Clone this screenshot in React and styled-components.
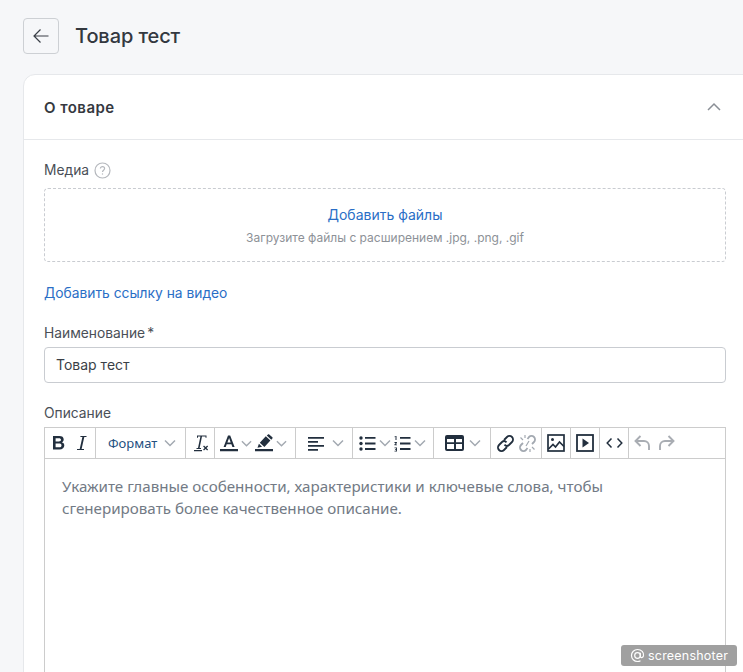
import styled, { createGlobalStyle } from "styled-components";

const GlobalStyle = createGlobalStyle`
  html, body {
    margin: 0;
    height: 672px;
    overflow: hidden;
    background: #f6f7f9;
    font-family: Inter, "Noto Sans", sans-serif;
  }
`;

const Page = styled.div`
  width: 747px;
  height: 672px;
  overflow: hidden;
  padding: 18px 0 0 23px;
  box-sizing: border-box;
`;

const TopBar = styled.div`
  display: flex;
  align-items: center;
  gap: 16px;
  margin-bottom: 20px;
`;

const BackButton = styled.button`
  width: 36px;
  height: 36px;
  padding: 0;
  display: flex;
  align-items: center;
  justify-content: center;
  background: #f6f7f9;
  border: 1px solid #cdd0d4;
  border-radius: 4px;
  color: #3a3f47;
`;

const Title = styled.h1`
  margin: 0;
  font-size: 20px;
  line-height: 36px;
  font-weight: 500;
  letter-spacing: -0.1px;
  color: #33383f;
`;

const Card = styled.section`
  background: #fff;
  border: 1px solid #e6e8eb;
  border-radius: 12px 0 0 0;
  min-height: 640px;
`;

const CardHeader = styled.div`
  height: 64px;
  padding: 0 25px 0 20px;
  display: flex;
  align-items: center;
  justify-content: space-between;
  border-bottom: 1px solid #e6e8eb;
`;

const CardTitle = styled.h2`
  margin: 0;
  font-size: 15px;
  font-weight: 600;
  letter-spacing: 0.45px;
  color: #35393f;
`;

const CardBody = styled.div`
  padding: 20px 20px 0;
`;

const Label = styled.div`
  display: flex;
  align-items: center;
  gap: 5px;
  height: 20px;
  font-size: 13.8px;
  color: #4a4f57;
`;

const Required = styled.span`
  margin-left: -3px;
`;

const DropZone = styled.div`
  margin-top: 8px;
  height: 74px;
  box-sizing: border-box;
  border: 1px dashed #c9ccd1;
  border-radius: 4px;
  display: flex;
  flex-direction: column;
  align-items: center;
  padding-top: 17px;
  gap: 6px;
`;

const TextLink = styled.a`
  font-size: 14px;
  line-height: 18px;
  color: #2a6ec6;
`;

const Hint = styled.div`
  font-size: 12px;
  line-height: 16px;
  color: #8d9197;
`;

const VideoLink = styled(TextLink)`
  display: block;
  font-size: 13.8px;
  margin: 22px 0 21px;
`;

const Input = styled.div`
  margin-top: 4px;
  height: 36px;
  box-sizing: border-box;
  border: 1px solid #c9ccd1;
  border-radius: 4px;
  padding: 0 11px 1px;
  display: flex;
  align-items: center;
  font-size: 14px;
  color: #3a3f47;
  margin-bottom: 20px;
`;

const Editor = styled.div`
  margin-top: 4px;
  border: 1px solid #ccc;
  border-bottom: 0;
  font-family: "Noto Sans", sans-serif;
`;

const Toolbar = styled.div`
  display: flex;
  height: 30px;
  border-bottom: 1px solid #ccc;
  color: #222f3e;
`;

const Group = styled.div`
  width: ${(p) => p.$width}px;
  box-sizing: border-box;
  display: flex;
  align-items: center;
  justify-content: ${(p) => p.$justify || "flex-start"};
  padding-left: ${(p) => p.$pad || 0}px;
  gap: ${(p) => p.$gap || 0}px;
  border-right: ${(p) => (p.$last ? "0" : "1px solid #ccc")};
  flex: none;
`;

const FormatText = styled.span`
  font-size: 13px;
  color: #24507f;
  width: 49px;
`;

const EditorArea = styled.div`
  height: 300px;
  padding: 16px 20px 17px 17px;
  font-size: 15.17px;
  line-height: 22px;
  color: #727a85;
`;

const Badge = styled.div`
  position: fixed;
  left: 621px;
  top: 645px;
  width: 116px;
  height: 21px;
  box-sizing: border-box;
  border-radius: 3px;
  background: #a0a0a0;
  color: #fff;
  display: flex;
  align-items: center;
  gap: 3px;
  padding-left: 9px;
  font-size: 12.5px;
  letter-spacing: 0.2px;
`;

const Svg = styled.svg`
  display: block;
  flex: none;
  color: ${(p) => p.$color || "currentColor"};
`;

function Chevron({ size = 12, color = "#a3a9b1", width = 1.5 }) {
  return (
    <Svg width={size} height={size} viewBox="0 0 12 12" fill="none" stroke={color} strokeWidth={width}>
      <path d="M1 3.5 6 8.5 11 3.5" />
    </Svg>
  );
}

function Icon({ w = 18, h = 18, vb = "0 0 18 18", color, children }) {
  return (
    <Svg width={w} height={h} viewBox={vb} fill="currentColor" $color={color}>
      {children}
    </Svg>
  );
}

function App() {
  return (
    <>
      <GlobalStyle />
      <Page>
        <TopBar>
          <BackButton>
            <Svg width="18" height="18" viewBox="0 0 18 18" fill="none" stroke="currentColor" strokeWidth="1.2">
              <path d="M16.5 9H2M8.5 2.5 2 9l6.5 6.5" />
            </Svg>
          </BackButton>
          <Title>Товар тест</Title>
        </TopBar>
        <Card>
          <CardHeader>
            <CardTitle>О товаре</CardTitle>
            <Svg width="14" height="14" viewBox="0 0 14 14" fill="none" stroke="#8a8f96" strokeWidth="1.5">
              <path d="M1 10 7 4l6 6" />
            </Svg>
          </CardHeader>
          <CardBody>
            <Label>
              Медиа
              <Svg width="17" height="17" viewBox="0 0 17 17" fill="none" stroke="#b5b8bd" strokeWidth="1.2">
                <circle cx="8.5" cy="8.5" r="7.5" />
                <path d="M6.4 6.6c0-1.2 1-2 2.1-2s2.1.8 2.1 2c0 1.6-2.1 1.6-2.1 3.3" />
                <path d="M8.5 11.4v1.2" />
              </Svg>
            </Label>
            <DropZone>
              <TextLink>Добавить файлы</TextLink>
              <Hint>Загрузите файлы с расширением .jpg, .png, .gif</Hint>
            </DropZone>
            <VideoLink>Добавить ссылку на видео</VideoLink>
            <Label>
              Наименование<Required>*</Required>
            </Label>
            <Input>Товар тест</Input>
            <Label>Описание</Label>
            <Editor>
              <Toolbar>
                <Group $width={51} $pad={7} $gap={11}>
                  <Icon w={14} h={16} vb="0 0 14 16">
                    <path d="M1 1h6.3c2.8 0 4.4 1.2 4.4 3.4 0 1.4-.8 2.4-2 2.9 1.6.4 2.6 1.5 2.6 3.2 0 2.4-1.8 3.9-4.8 3.9H1V1zm2.6 2.2v3.3h3.2c1.4 0 2.2-.6 2.2-1.7s-.8-1.6-2.2-1.6H3.6zm0 5.4v3.7h3.4c1.6 0 2.5-.7 2.5-1.9s-.9-1.8-2.5-1.8H3.6z" />
                  </Icon>
                  <Icon w={10} h={16} vb="0 0 10 16">
                    <path d="M3.5 1h6v1H7.3L4.6 14H7v1H0v-1h2.7L5.4 2H3.3z" />
                  </Icon>
                </Group>
                <Group $width={90} $pad={12} $gap={7}>
                  <FormatText>Формат</FormatText>
                  <Chevron />
                </Group>
                <Group $width={29} $pad={6}>
                  <Icon w={18} h={18} vb="0 0 18 18">
                    <path d="M2 16h8v1.2H2zM5 1.5h9.5v2.2h-1V2.6H10L7.6 14H9v1H4.5v-1H6L8.4 2.6H6v1.1H5z" />
                    <path d="M12 11.5l1.6 1.6 1.6-1.6.9.9-1.6 1.6 1.6 1.6-.9.9-1.6-1.6-1.6 1.6-.9-.9 1.6-1.6-1.6-1.6z" />
                  </Icon>
                </Group>
                <Group $width={81} $pad={5} $gap={3}>
                  <Icon w={18} h={18}>
                    <path d="M0 15h18v2.2H0zM8 1.5h2.2L14.6 13h-2.2l-1-2.8H6.7l-1 2.8H3.6zm-.6 7h3.3L9.1 4z" />
                  </Icon>
                  <Chevron size={11} />
                  <Icon w={18} h={18}>
                    <path d="M0 15h18v2.2H0zM2.5 13.8l1.4-4 3.2 3zM4.8 8.8l6-6.6 4.6 4.2-6 6.6zM11.8 1.4l1.2-1c.4-.3.9-.3 1.2 0l3.2 2.9c.3.3.3.8 0 1.2l-1.1 1.2z" />
                  </Icon>
                  <Chevron size={11} />
                </Group>
                <Group $width={57} $pad={12} $gap={7}>
                  <Icon w={17} h={17} vb="0 0 17 17">
                    <path d="M0 2h16v1.8H0zM0 6h10v1.8H0zM0 10h16v1.8H0zM0 14h10v1.8H0z" />
                  </Icon>
                  <Chevron />
                </Group>
                <Group $width={81} $pad={6} $gap={3}>
                  <Icon w={17} h={17} vb="0 0 17 17">
                    <circle cx="2" cy="3" r="1.7" />
                    <circle cx="2" cy="8.5" r="1.7" />
                    <circle cx="2" cy="14" r="1.7" />
                    <path d="M6 2h10.5v1.8H6zM6 7.6h10.5v1.8H6zM6 13.1h10.5v1.8H6z" />
                  </Icon>
                  <Chevron />
                  <Icon w={17} h={17} vb="0 0 17 17">
                    <path d="M1.5 1h1v4h-1zM.5 1.5 1.8 1v.8L.5 2.2zM.5 7h2.4v1L1.6 9.5h1.4v.8H.4v-.9L1.8 8H.5zM.5 12.5H3v4H.5v-.7h1.6v-.9H1v-.7h1.1v-1H.5z" />
                    <path d="M6 2h10.5v1.8H6zM6 7.6h10.5v1.8H6zM6 13.1h10.5v1.8H6z" />
                  </Icon>
                  <Chevron />
                </Group>
                <Group $width={57} $pad={11} $gap={5}>
                  <Icon w={19} h={16} vb="0 0 19 16">
                    <path fillRule="evenodd" d="M2 0h15a2 2 0 0 1 2 2v12a2 2 0 0 1-2 2H2a2 2 0 0 1-2-2V2a2 2 0 0 1 2-2zm0 4v3.2h7V4zm9 0v3.2h6V4zM2 9v5h7V9zm9 0v5h6V9z" />
                  </Icon>
                  <Chevron />
                </Group>
                <Group $width={51} $pad={5} $gap={3}>
                  <Svg width="19" height="19" viewBox="0 0 19 19" fill="none" stroke="currentColor" strokeWidth="1.8">
                    <path d="M8 6 11 3a3.2 3.2 0 0 1 5 5l-3 3a3.2 3.2 0 0 1-4.5-.4" />
                    <path d="M11 13 8 16a3.2 3.2 0 0 1-5-5l3-3a3.2 3.2 0 0 1 4.5.4" />
                  </Svg>
                  <Svg width="19" height="19" viewBox="0 0 19 19" fill="none" stroke="#a3a9b1" strokeWidth="1.8">
                    <path d="M9.5 5 11 3a3.2 3.2 0 0 1 5 5l-2 2" />
                    <path d="M9.5 14 8 16a3.2 3.2 0 0 1-5-5l2-2" />
                    <path d="M7 1v3M2.5 3.5 5 6M12 18v-3M16.5 15.5 14 13M11 7l-3 5" strokeWidth="1.2" />
                  </Svg>
                </Group>
                <Group $width={29} $justify="center">
                  <Svg width="18" height="18" viewBox="0 0 18 18" fill="none" stroke="currentColor" strokeWidth="1.7">
                    <rect x="1" y="1" width="16" height="16" />
                    <circle cx="5.5" cy="5.5" r="1.5" fill="currentColor" stroke="none" />
                    <path d="M1.5 15 6 10.5l2.5 2.5L12.5 8l4.5 4.5" />
                  </Svg>
                </Group>
                <Group $width={29} $justify="center">
                  <Svg width="18" height="18" viewBox="0 0 18 18" fill="none" stroke="currentColor" strokeWidth="1.8">
                    <rect x="1" y="1" width="16" height="16" />
                    <path d="M6.5 4.5v9L13 9z" fill="currentColor" stroke="none" />
                  </Svg>
                </Group>
                <Group $width={29} $justify="center">
                  <Svg width="17" height="12" viewBox="0 0 17 12" fill="none" stroke="currentColor" strokeWidth="1.5">
                    <path d="M5.5 1.5 1.2 6l4.3 4.5M11.5 1.5 15.8 6l-4.3 4.5" />
                  </Svg>
                </Group>
                <Group $width={97} $pad={5} $gap={7} $last>
                  <Svg width="17" height="18" viewBox="0 0 17 18" fill="none" stroke="#a9adb3" strokeWidth="1.9">
                    <path d="M6.5 2 1.5 7l5 5M2 7h8a5 5 0 0 1 5 5v4" />
                  </Svg>
                  <Svg width="17" height="18" viewBox="0 0 17 18" fill="none" stroke="#a9adb3" strokeWidth="1.9">
                    <path d="M10.5 2l5 5-5 5M15 7H7a5 5 0 0 0-5 5v4" />
                  </Svg>
                </Group>
              </Toolbar>
              <EditorArea>
                Укажите главные особенности, характеристики и ключевые слова, чтобы сгенерировать более качественное описание.
              </EditorArea>
            </Editor>
          </CardBody>
        </Card>
      </Page>
      <Badge>
        <Svg width="15" height="15" viewBox="0 0 15 15" fill="none" stroke="#fff" strokeWidth="1.2">
          <circle cx="7.5" cy="7.5" r="2.8" />
          <path d="M10.3 4.7v3.8c0 1.5 2.7 1.5 3.2-.6.6-3.4-2-6.4-6-6.4a6 6 0 0 0 0 12c1.2 0 2.2-.3 3-.8" />
        </Svg>
        screenshoter
      </Badge>
    </>
  );
}

export default App;
